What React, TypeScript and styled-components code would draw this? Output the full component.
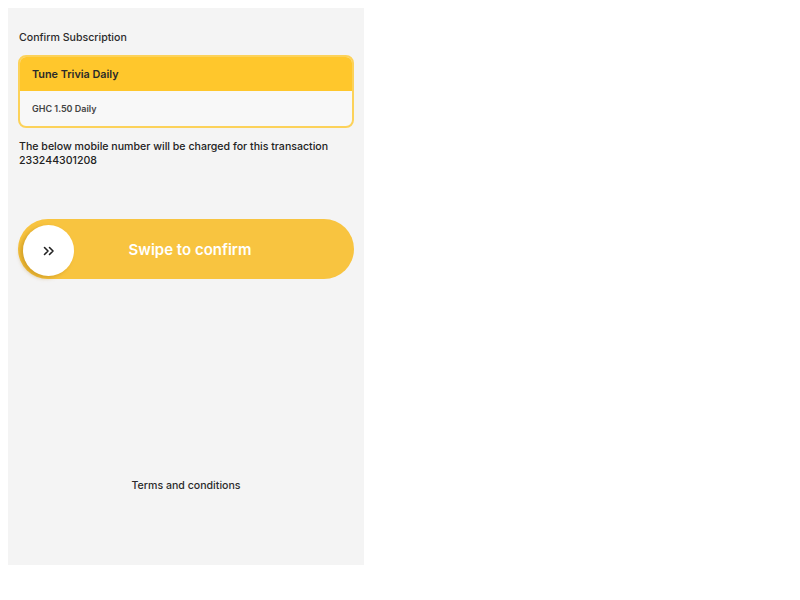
import React from "react";
import styled, { createGlobalStyle } from "styled-components";

const Global = createGlobalStyle`
  body { margin: 8px; font-family: Inter, "Noto Sans", sans-serif; background: #fff; }
  * { box-sizing: border-box; }
`;

const Page = styled.div`
  width: 356px;
  height: 557px;
  background: #f4f4f4;
  padding: 23px 10px 0;
  display: flex;
  flex-direction: column;
`;

const Title = styled.div`
  font-size: 10.6px;
  line-height: 14px;
  font-weight: 500;
  color: #2b2b2b;
  padding-left: 1px;
`;

const Card = styled.div`
  margin-top: 10px;
  border: 2px solid #fcd25a;
  border-radius: 8px;
  overflow: hidden;
  background: #f8f8f8;
`;

const CardHeader = styled.div`
  height: 34px;
  background: #ffc72c;
  display: flex;
  align-items: center;
  padding-left: 12px;
  font-size: 10.8px;
  font-weight: 600;
  color: #2a2a2a;
`;

const CardBody = styled.div`
  height: 35px;
  display: flex;
  align-items: center;
  padding-left: 12px;
  font-size: 9px;
  font-weight: 600;
  color: #444;
`;

const Note = styled.div`
  margin-top: 12px;
  font-size: 10.6px;
  line-height: 14px;
  font-weight: 500;
  color: #222;
  padding-left: 1px;
`;

const Swipe = styled.div`
  position: relative;
  margin-top: 51px;
  height: 60px;
  border-radius: 30px;
  background: #f8c440;
  display: flex;
  align-items: center;
  justify-content: center;
  padding-left: 8px;
`;

const Knob = styled.div`
  position: absolute;
  left: 5px;
  top: 6px;
  width: 51px;
  height: 51px;
  border-radius: 50%;
  background: #fff;
  box-shadow: -3px 2px 4px rgba(160, 110, 0, 0.4);
  display: flex;
  align-items: center;
  justify-content: center;
`;

const SwipeLabel = styled.span`
  color: #fff;
  font-size: 15px;
  font-weight: 600;
`;

const Terms = styled.div`
  margin-top: 200px;
  text-align: center;
  font-size: 10.6px;
  line-height: 14px;
  font-weight: 500;
  color: #2b2b2b;
`;

export default function App() {
  return (
    <>
      <Global />
      <Page>
        <Title>Confirm Subscription</Title>
        <Card>
          <CardHeader>Tune Trivia Daily</CardHeader>
          <CardBody>GHC 1.50 Daily</CardBody>
        </Card>
        <Note>
          The below mobile number will be charged for this transaction
          <br />
          233244301208
        </Note>
        <Swipe>
          <Knob>
            <svg width="12" height="10" viewBox="0 0 12 10" fill="none">
              <path d="M1.5 1.5L5 5L1.5 8.5M6.5 1.5L10 5L6.5 8.5" stroke="#222" strokeWidth="1.6" strokeLinecap="round" strokeLinejoin="round" />
            </svg>
          </Knob>
          <SwipeLabel>Swipe to confirm</SwipeLabel>
        </Swipe>
        <Terms>Terms and conditions</Terms>
      </Page>
    </>
  );
}
